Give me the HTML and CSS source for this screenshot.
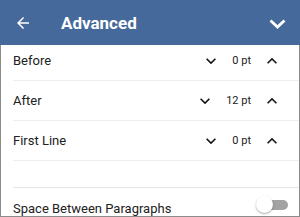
FILE: index.html
```html
<!DOCTYPE html>
<html lang="en">
<head>
<meta charset="utf-8">
<title>Advanced</title>
<link rel="stylesheet" href="styles.css">
</head>
<body>
<div class="app">
  <header class="bar">
    <svg class="back" width="18" height="18" viewBox="0 0 24 24"><path d="M20 11H7.83l5.59-5.59L12 4l-8 8 8 8 1.41-1.41L7.83 13H20v-2z" fill="#fff"/></svg>
    <h1 class="title">Advanced</h1>
    <svg class="collapse" width="17" height="10" viewBox="0 0 17 10"><polyline points="1.5,1.5 8.5,8 15.5,1.5" fill="none" stroke="#fff" stroke-width="2.8" stroke-linecap="butt" stroke-linejoin="miter"/></svg>
  </header>
  <div class="panel">
    <div class="list">
      <div class="row">
        <span class="label">Before</span>
        <svg class="icon" width="20" height="20" viewBox="0 0 24 24"><path d="M16.59 8.59L12 13.17 7.41 8.59 6 10l6 6 6-6z"/></svg>
        <span class="value">0 pt</span>
        <svg class="icon" width="20" height="20" viewBox="0 0 24 24"><path d="M12 8l-6 6 1.41 1.41L12 10.83l4.59 4.58L18 14z"/></svg>
      </div>
      <div class="row">
        <span class="label">After</span>
        <svg class="icon" width="20" height="20" viewBox="0 0 24 24"><path d="M16.59 8.59L12 13.17 7.41 8.59 6 10l6 6 6-6z"/></svg>
        <span class="value">12 pt</span>
        <svg class="icon" width="20" height="20" viewBox="0 0 24 24"><path d="M12 8l-6 6 1.41 1.41L12 10.83l4.59 4.58L18 14z"/></svg>
      </div>
      <div class="row">
        <span class="label">First Line</span>
        <svg class="icon" width="20" height="20" viewBox="0 0 24 24"><path d="M16.59 8.59L12 13.17 7.41 8.59 6 10l6 6 6-6z"/></svg>
        <span class="value">0 pt</span>
        <svg class="icon" width="20" height="20" viewBox="0 0 24 24"><path d="M12 8l-6 6 1.41 1.41L12 10.83l4.59 4.58L18 14z"/></svg>
      </div>
      <div class="spacer"></div>
      <div class="row toggle-row">
        <span class="label">Space Between Paragraphs</span>
        <span class="switch"><span class="thumb"></span></span>
      </div>
    </div>
  </div>
</div>
</body>
</html>
```
FILE: styles.css
```css
html, body {
  margin: 0;
  padding: 0;
  background: #fff;
}
body {
  font-family: Roboto, "Liberation Sans", sans-serif;
  color: #212121;
}
.app {
  width: 300px;
  height: 217px;
  overflow: hidden;
}
.bar {
  height: 45px;
  background: #46699b;
  display: flex;
  align-items: center;
  padding-left: 14px;
  padding-right: 14px;
  box-sizing: border-box;
}
.back {
  display: block;
  flex: none;
}
.title {
  margin: 0 0 0 29px;
  flex: 1;
  font-size: 17px;
  font-weight: 700;
  color: #fff;
  line-height: 20px;
}
.collapse {
  display: block;
  flex: none;
  margin-top: 2px;
}
.panel {
  height: 172px;
  box-sizing: border-box;
  border: 1px solid #8c8c8c;
  border-top: none;
  overflow: hidden;
}
.list {
  margin-top: -4px;
}
.row {
  margin-left: 12px;
  height: 40px;
  box-sizing: border-box;
  border-bottom: 1px solid #eeeeee;
  display: flex;
  align-items: center;
  padding-right: 17px;
}
.label {
  flex: 1;
  font-size: 13px;
  color: #212121;
}
.icon {
  display: block;
  flex: none;
  fill: #141414;
}
.value {
  font-size: 11px;
  margin: 0 11px;
  color: #212121;
}
.spacer {
  margin-left: 12px;
  height: 27px;
  box-sizing: border-box;
  border-bottom: 1px solid #e6e6e6;
}
.toggle-row {
  border-bottom: none;
  padding-right: 11px;
}
.switch {
  position: relative;
  width: 26px;
  height: 10px;
  border-radius: 5px;
  background: #a2a2a2;
  margin-bottom: 6px;
  flex: none;
}
.thumb {
  position: absolute;
  left: -6px;
  top: -4px;
  width: 17px;
  height: 17px;
  border-radius: 50%;
  background: #fff;
  box-shadow: 0 1px 2px rgba(0, 0, 0, 0.35);
}
```
